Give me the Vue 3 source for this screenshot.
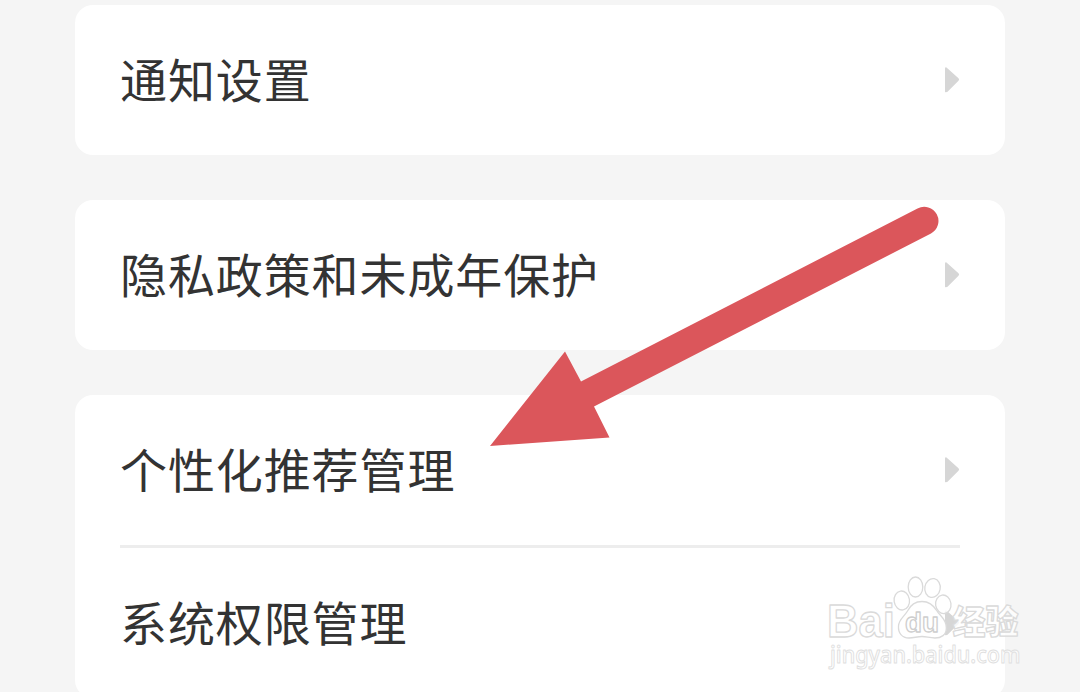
<script setup>
const groups = [
  ['通知设置'],
  ['隐私政策和未成年保护'],
  ['个性化推荐管理', '系统权限管理'],
]
</script>

<template>
  <main class="settings">
    <section v-for="group in groups" :key="group[0]" class="card">
      <div v-for="label in group" :key="label" class="row">
        <span class="label">{{ label }}</span>
        <svg class="chevron" viewBox="0 0 15 26" width="15" height="26">
          <path d="M0 1.5Q0 0 1.5 .4L13.5 11.3Q14.8 12.5 13.5 13.7L2.5 24.7Q1.5 25.5 0 25Z" />
        </svg>
      </div>
    </section>

    <svg class="pointer" viewBox="0 0 1080 692" width="1080" height="692">
      <path
        d="M490 446L565 351.5L581 381.5L917.5 208.5A14 14 0 0 1 931 233.5L594 406.5L609.5 437.5Z"
      />
    </svg>

    <svg class="watermark" viewBox="0 0 230 116" width="230" height="116">
      <g class="mark">
        <text class="bai" x="5" y="67" textLength="68" lengthAdjust="spacingAndGlyphs">Bai</text>
        <ellipse cx="79.8" cy="30.5" rx="7.7" ry="9.5" transform="rotate(-8 79.8 30.5)" />
        <ellipse cx="93.5" cy="17" rx="7.3" ry="10" />
        <ellipse cx="110.5" cy="18" rx="7.7" ry="9.5" transform="rotate(10 110.5 18)" />
        <ellipse cx="121.3" cy="34.3" rx="7.7" ry="9.3" transform="rotate(-8 121.3 34.3)" />
        <path
          d="M100 31.500C108 31.500 112 36 115 41C118 46 124.500 49 124.500 58C124.500 65 119 68 113 68C107 68 105 66.500 100 66.500C95 66.500 92 68 87 68C80 68 76 63 76.500 56C77 49 82 47 85.500 41C88 36 92 31.500 100 31.500Z"
        />
        <text class="du" x="83" y="61.500" textLength="34" lengthAdjust="spacingAndGlyphs">du</text>
        <text class="exp" x="130.500" y="64" textLength="66" lengthAdjust="spacingAndGlyphs">经验</text>
        <text class="url" x="8" y="93" textLength="190.500" lengthAdjust="spacingAndGlyphs">jingyan.baidu.com</text>
      </g>
    </svg>
  </main>
</template>

<style>
body {
  margin: 0;
  background: #f5f5f5;
}
</style>

<style scoped>
.settings {
  position: relative;
  box-sizing: border-box;
  height: 692px;
  padding: 5px 75px 0;
  display: flex;
  flex-direction: column;
  gap: 45px;
  overflow: hidden;
  background: #f5f5f5;
  font-family: 'Noto Sans CJK SC', sans-serif;
}

.card {
  flex: none;
  padding: 0 45px;
  border-radius: 18px;
  background: #fff;
}

.row {
  height: 150px;
  display: flex;
  align-items: center;
  justify-content: space-between;
}

.row + .row {
  border-top: 3px solid #ededed;
}

.label {
  padding-bottom: 4px;
  color: #333;
  font-size: 47px;
  line-height: 70px;
  letter-spacing: 0.9px;
  white-space: nowrap;
}

.chevron {
  fill: #d6d6d6;
}

.pointer {
  position: absolute;
  top: 0;
  left: 0;
  fill: #db565b;
}

.watermark {
  position: absolute;
  left: 822px;
  top: 570px;
  overflow: visible;
}

.mark {
  fill: #fff;
  fill-opacity: 0.8;
  stroke: #dadada;
  stroke-width: 1.3;
  stroke-linejoin: round;
}

.bai {
  font: bold 47px 'Liberation Sans', sans-serif;
}

.du {
  font: bold 28px 'Liberation Sans', sans-serif;
  stroke: #cecece;
}

.exp {
  font: 900 33px 'Noto Sans CJK SC', sans-serif;
}

.url {
  font: 500 24px 'Noto Sans', sans-serif;
  stroke: #e0e0e0;
  stroke-width: 1;
}
</style>
